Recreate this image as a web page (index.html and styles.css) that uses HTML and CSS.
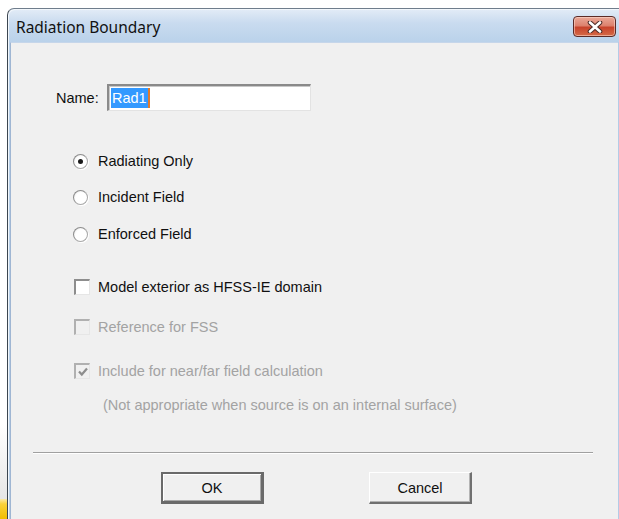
FILE: index.html
```html
<!DOCTYPE html>
<html>
<head>
<meta charset="utf-8">
<title>Radiation Boundary</title>
<link rel="stylesheet" href="styles.css">
</head>
<body>
<div class="desktop">
  <div class="desk-strip">
    <div class="desk-fill"></div>
    <div class="desk-task"></div>
  </div>
  <div class="window">
    <div class="titlebar">
      <span class="title">Radiation Boundary</span>
      <button class="close" type="button" aria-label="Close">
        <svg width="18" height="12" viewBox="0 0 18 12">
          <path d="M4 1.5 L14 10.5 M14 1.5 L4 10.5" stroke="#4a2a26" stroke-width="4.6" stroke-linecap="round"/>
          <path d="M4 1.5 L14 10.5 M14 1.5 L4 10.5" stroke="#ffffff" stroke-width="2.6" stroke-linecap="round"/>
        </svg>
      </button>
    </div>
    <div class="frame">
      <div class="client">
        <div class="name-row">
          <label class="name-label" for="bname">Name:</label>
          <div class="field" id="bname"><span class="sel">Rad1</span><span class="caret"></span></div>
        </div>

        <div class="row r1"><span class="radio on"></span><span class="lbl">Radiating Only</span></div>
        <div class="row r2"><span class="radio"></span><span class="lbl">Incident Field</span></div>
        <div class="row r3"><span class="radio"></span><span class="lbl">Enforced Field</span></div>

        <div class="row c1"><span class="check"></span><span class="lbl lbl-c">Model exterior as HFSS-IE domain</span></div>
        <div class="row c2 off"><span class="check"></span><span class="lbl lbl-c">Reference for FSS</span></div>
        <div class="row c3 off"><span class="check">
          <svg width="12" height="12" viewBox="0 0 12 12"><path d="M2 5.5 L4.8 8.5 L10 2.5" fill="none" stroke="#8d8d8d" stroke-width="2.2"/></svg>
        </span><span class="lbl lbl-c">Include for near/far field calculation</span></div>
        <div class="row note off"><span class="lbl">(Not appropriate when source is on an internal surface)</span></div>

        <div class="separator"></div>

        <div class="buttons">
          <button class="btn default" type="button">OK</button>
          <button class="btn" type="button">Cancel</button>
        </div>
      </div>
    </div>
  </div>
</div>
</body>
</html>
```

FILE: styles.css
```css
html, body {
  margin: 0;
  padding: 0;
  background: #ffffff;
  overflow: hidden;
}

.desktop {
  display: flex;
  width: 619px;
  height: 519px;
}

/* sliver of desktop left of the dialog */
.desk-strip {
  width: 7px;
  display: flex;
  flex-direction: column;
}
.desk-fill {
  flex: 1;
  background: linear-gradient(#ffffff 0%, #ffffff 85%, #e6e6e6 100%);
}
.desk-task {
  height: 20px;
  background: linear-gradient(#fbe9a6 0%, #f9d23a 25%, #f2bd00 100%);
}

.window {
  margin-top: 8px;
  flex: 1;
  display: flex;
  flex-direction: column;
  border-left: 1px solid #3c4650;
  border-top: 1px solid #6f7d8c;
  border-top-left-radius: 7px;
  background: linear-gradient(#e3ecf7 0px, #c9dbef 14px, #b9d1ea 34px);
  box-shadow: inset 1px 1px 0 #f2f7fc;
}

.titlebar {
  height: 33px;
  display: flex;
  align-items: center;
  justify-content: space-between;
  padding-left: 8px;
  padding-right: 3px;
}

.title {
  font-family: "Noto Sans", "Open Sans", sans-serif;
  font-size: 15.5px;
  color: #111111;
  margin-top: 2px;
}

.close {
  width: 43px;
  height: 21px;
  margin-top: 2px;
  padding: 0;
  border: 1px solid #5b2b27;
  border-radius: 4px;
  background: linear-gradient(#eaa898 0%, #dd826e 45%, #c8442c 55%, #d56a47 100%);
  box-shadow: inset 0 0 0 1px rgba(255, 220, 210, 0.55);
  display: flex;
  align-items: center;
  justify-content: center;
}

.frame {
  flex: 1;
  display: flex;
  padding-left: 2px;
  border-right: 1px solid #b4cbe6;
}

.client {
  flex: 1;
  background: #f0f0f0;
  border-left: 1px solid #9fb6d3;
  border-top: 1px solid #c6d6ea;
  padding-top: 41px;
  display: flex;
  flex-direction: column;
  font-family: "Liberation Sans", Arial, sans-serif;
  font-size: 14.5px;
  color: #101010;
}

.name-row {
  display: flex;
  align-items: center;
  height: 27px;
  padding-left: 45px;
}
.name-label {
  width: 51px;
}
.field {
  box-sizing: border-box;
  width: 204px;
  height: 27px;
  background: #ffffff;
  border-top: 2px solid #8a8a8a;
  border-left: 2px solid #8a8a8a;
  border-right: 1px solid #e3e3e3;
  border-bottom: 1px solid #e3e3e3;
  box-shadow: inset 1px 1px 0 #c8c8c8;
  display: flex;
  align-items: center;
  padding-left: 2px;
}
.sel {
  background: #3399ff;
  color: #ffffff;
  height: 20px;
  line-height: 20px;
  padding: 0 1px;
}
.caret {
  width: 2px;
  height: 20px;
  background: #e07a2c;
}

.row {
  display: flex;
  align-items: center;
  height: 22px;
  padding-left: 62px;
}
.r1 { margin-top: 39px; }
.r2 { margin-top: 14px; }
.r3 { margin-top: 15px; }
.c1 { margin-top: 31px; }
.c2 { margin-top: 18px; }
.c3 { margin-top: 22px; }
.note { margin-top: 12px; padding-left: 92px; }

.off { color: #a3a3a3; }

.radio {
  box-sizing: border-box;
  width: 15px;
  height: 15px;
  border-radius: 50%;
  background: radial-gradient(circle at 60% 60%, #ffffff 0 55%, #f4f4f4 70%);
  border: 1px solid #a9a9a9;
  border-top-color: #8c8c8c;
  border-left-color: #8c8c8c;
  box-shadow: 1px 1px 0 #ffffff;
  display: flex;
  align-items: center;
  justify-content: center;
}
.radio.on::after {
  content: "";
  width: 5px;
  height: 5px;
  border-radius: 50%;
  background: #1a1a1a;
}

.lbl { margin-left: 10px; }
.lbl-c { margin-left: 8px; }
.note .lbl { margin-left: 0; }

.check {
  box-sizing: border-box;
  margin-left: 1px;
  width: 16px;
  height: 16px;
  background: #ffffff;
  border-top: 2px solid #8d8d8d;
  border-left: 2px solid #8d8d8d;
  border-right: 1px solid #e6e6e6;
  border-bottom: 1px solid #e6e6e6;
  display: flex;
  align-items: center;
  justify-content: center;
}
.off .check {
  background: #f0f0f0;
  border-top-color: #b0b0b0;
  border-left-color: #b0b0b0;
}

.separator {
  margin-top: 36px;
  margin-left: 22px;
  width: 560px;
  height: 1px;
  background: #a0a0a0;
  border-bottom: 1px solid #ffffff;
}

.buttons {
  margin-top: 18px;
  display: flex;
  gap: 105px;
  padding-left: 150px;
}
.btn {
  box-sizing: border-box;
  width: 103px;
  height: 32px;
  padding: 0;
  font-family: "Liberation Sans", Arial, sans-serif;
  font-size: 14.5px;
  color: #101010;
  background: #f0f0f0;
  border-top: 1px solid #ffffff;
  border-left: 1px solid #ffffff;
  border-right: 2px solid #707070;
  border-bottom: 2px solid #707070;
  box-shadow: inset -1px -1px 0 #b4b4b4;
}
.btn.default {
  border: 2px solid #6a6a6a;
  border-right-width: 3px;
  border-bottom-width: 3px;
  box-shadow: inset 1px 1px 0 #ffffff, inset -1px -1px 0 #a8a8a8;
}
```
